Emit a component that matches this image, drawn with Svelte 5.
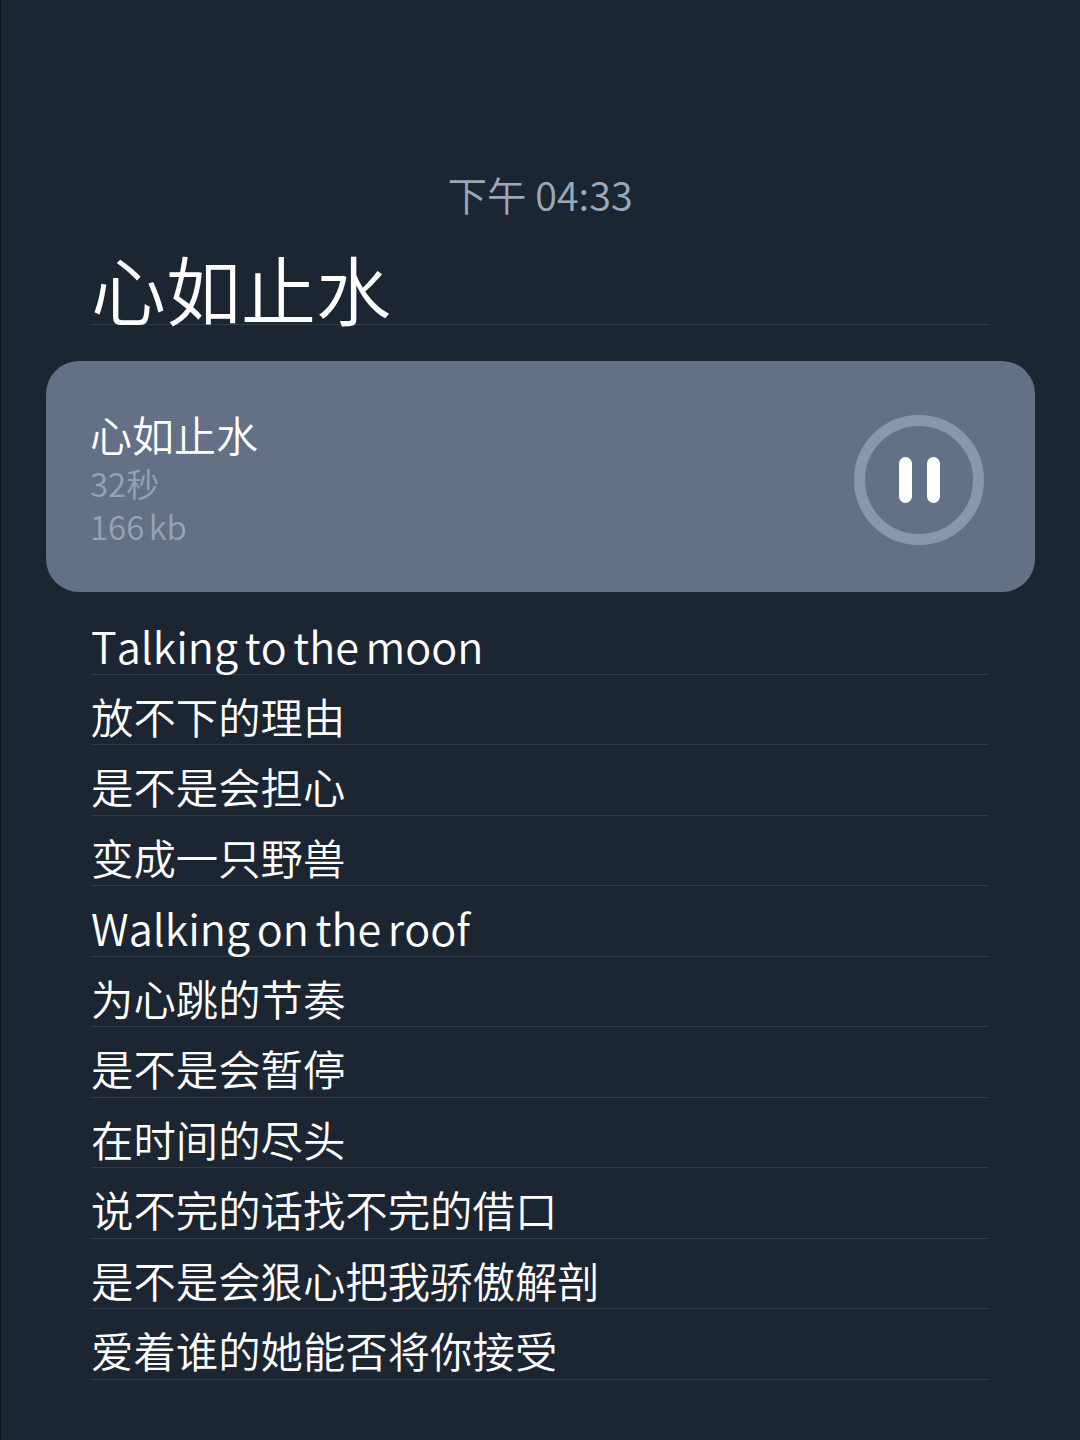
<script>
  const lyrics = [
    { text: "Talking to the moon", latin: true },
    { text: "放不下的理由" },
    { text: "是不是会担心" },
    { text: "变成一只野兽" },
    { text: "Walking on the roof", latin: true },
    { text: "为心跳的节奏" },
    { text: "是不是会暂停" },
    { text: "在时间的尽头" },
    { text: "说不完的话找不完的借口" },
    { text: "是不是会狠心把我骄傲解剖" },
    { text: "爱着谁的她能否将你接受" }
  ];
</script>

<style>
  :global(body) {
    background: #1c2633;
  }
  .page {
    box-sizing: border-box;
    height: 1440px;
    padding-top: 167px;
    overflow: hidden;
    background: #1c2633;
    box-shadow: inset 1px 0 0 #10161f;
    font-family: "Noto Sans CJK SC", "Noto Sans", sans-serif;
    font-weight: 350;
    color: #fff;
  }
  .time {
    height: 55px;
    line-height: 54px;
    text-align: center;
    font-size: 39.5px;
    color: #9aa8bc;
  }
  .title {
    box-sizing: border-box;
    height: 103px;
    margin: 0 91px;
    line-height: 132px;
    font-size: 75px;
    font-weight: 350;
    border-bottom: 1px solid #303c4b;
  }
  .voice {
    box-sizing: border-box;
    display: flex;
    align-items: center;
    justify-content: space-between;
    height: 231px;
    margin: 36px 45px 0 46px;
    padding: 0 51px 0 44px;
    border-radius: 33px;
    background: #647086;
  }
  .voice-name {
    font-size: 42px;
    line-height: 48px;
    margin-top: 4px;
    margin-bottom: 4px;
  }
  .voice-meta {
    font-size: 33px;
    line-height: 43px;
    word-spacing: -3px;
    color: #94a3b8;
  }
  .pause {
    box-sizing: border-box;
    display: flex;
    align-items: center;
    justify-content: center;
    gap: 15px;
    width: 130px;
    height: 130px;
    margin-top: 7px;
    border: 11px solid #8a96ab;
    border-radius: 50%;
  }
  .pause span {
    width: 13px;
    height: 46px;
    border-radius: 7px;
    background: #fff;
  }
  .lyrics {
    margin: 12px 92px 0 91px;
  }
  .line {
    box-sizing: border-box;
    height: 70.5px;
    line-height: 82px;
    font-size: 42.4px;
    white-space: nowrap;
    border-bottom: 1px solid #303c4b;
  }
  .latin {
    font-size: 43.2px;
    word-spacing: -3px;
    font-kerning: none;
  }
</style>

<div class="page">
  <div class="time">下午 04:33</div>
  <div class="title">心如止水</div>

  <div class="voice">
    <div>
      <div class="voice-name">心如止水</div>
      <div class="voice-meta">32秒</div>
      <div class="voice-meta">166 kb</div>
    </div>
    <div class="pause"><span></span><span></span></div>
  </div>

  <div class="lyrics">
    {#each lyrics as line}
      <div class="line" class:latin={line.latin}>{line.text}</div>
    {/each}
  </div>
</div>
